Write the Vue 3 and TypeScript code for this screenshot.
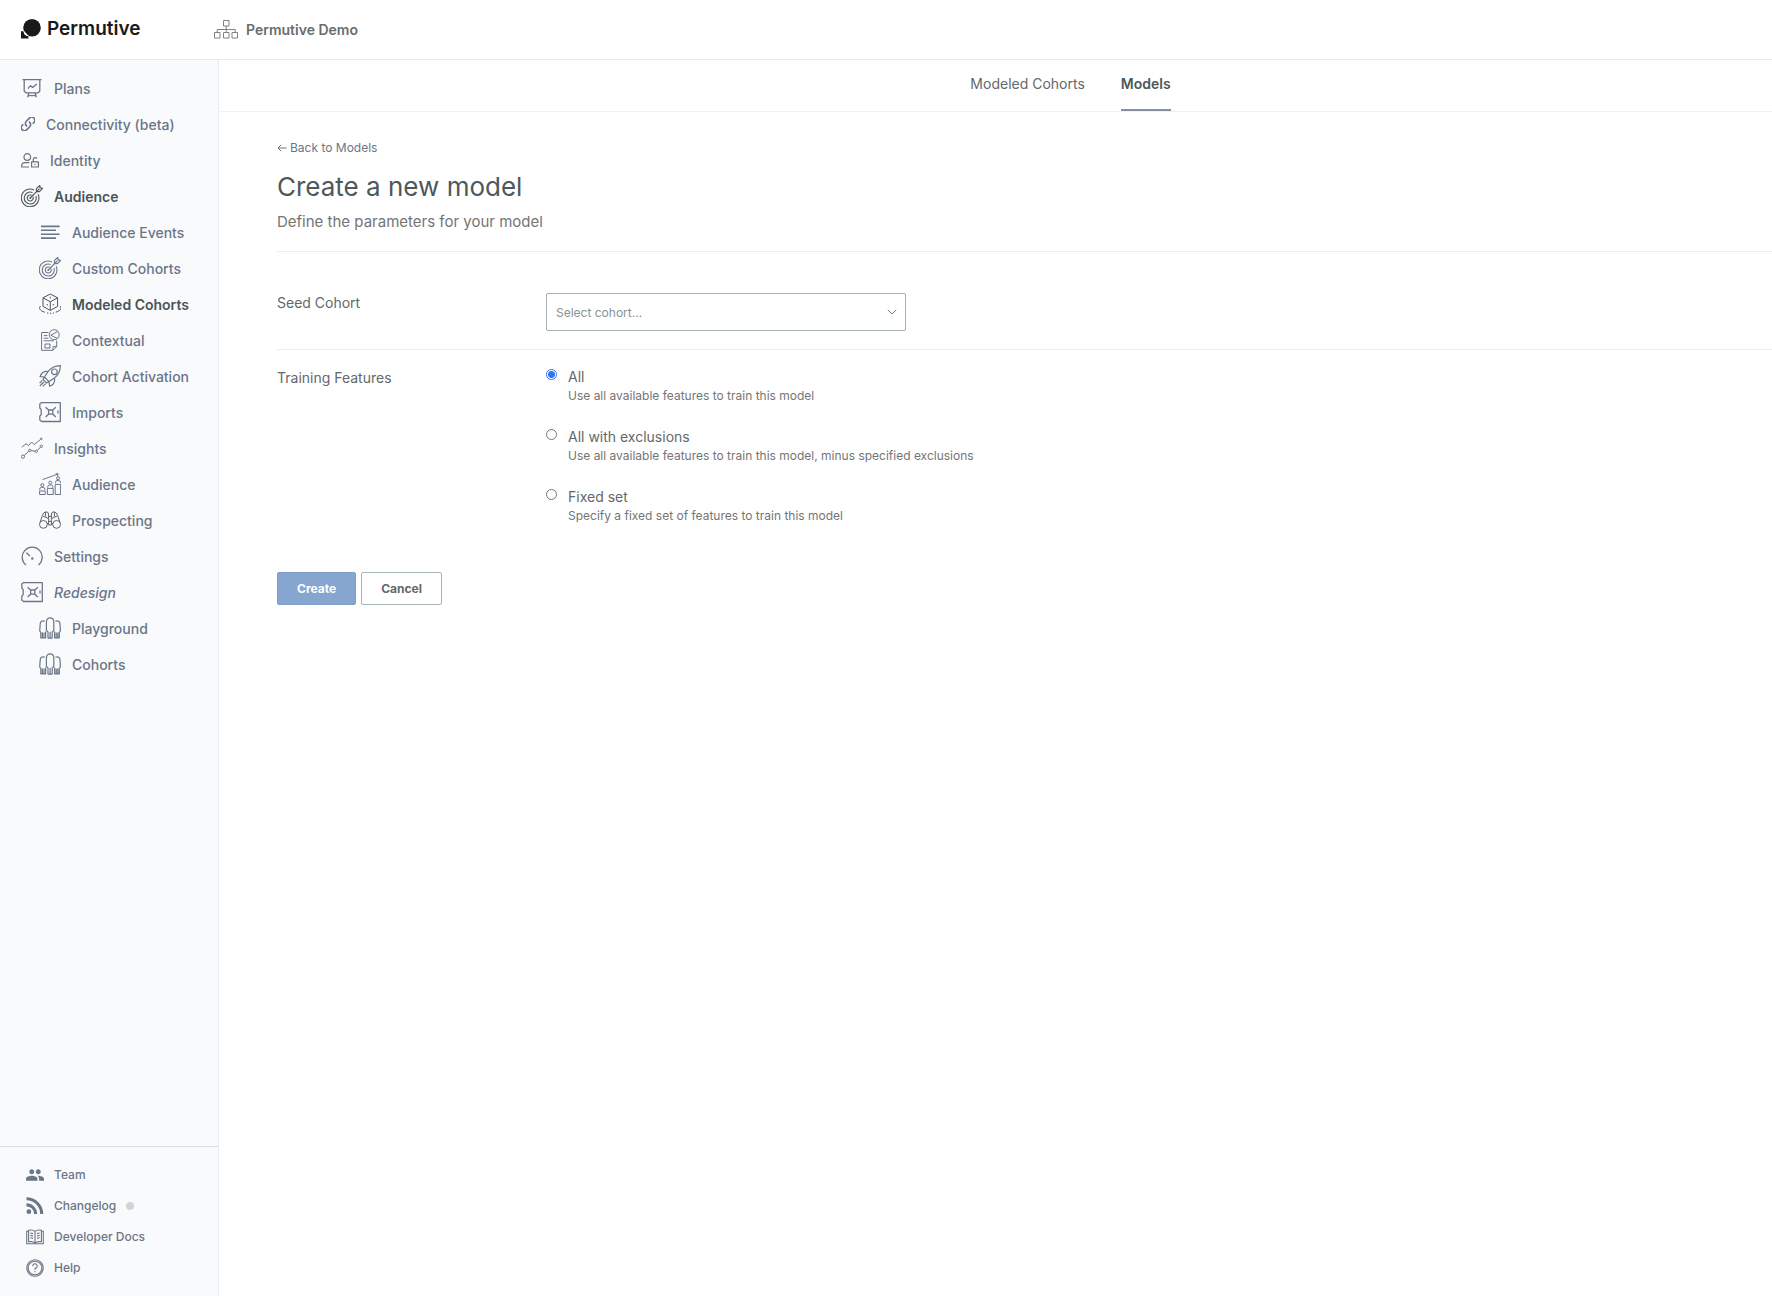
<script setup lang="ts">
import { ref } from 'vue'

interface Icon {
  box: string
  w: number
  h: number
  line?: string
  fill?: string
  weight?: number
  tone?: string
}

interface NavItem {
  label: string
  icon: string
  sub?: boolean
  active?: boolean
  italic?: boolean
  badge?: boolean
}

/** Path data for a full circle. */
const ring = (x: number, y: number, r: number): string =>
  `M${x - r} ${y}a${r} ${r} 0 1 0 ${r * 2} 0a${r} ${r} 0 1 0 ${-r * 2} 0`

/** Path data for one figure with a head and an open body. */
const bust = (x: number, y: number): string =>
  ring(x, y, 1.5) + `M${x - 2.6} ${y + 5.2}V${y + 4.2}Q${x - 2.6} ${y + 2.6} ${x - 1} ${y + 2.4}H${x + 1}Q${x + 2.6} ${y + 2.6} ${x + 2.6} ${y + 4.2}V${y + 5.2}`

const icons: Record<string, Icon> = {
  org: {
    box: '0 0 24 19', w: 24, h: 19,
    line: 'M9.5 .5H15V6H9.5ZM12.2 6V12.5M3.2 12.5V9.5H21.2V12.5M.5 12.5H6V18H.5ZM9.5 12.5H15V18H9.5ZM18 12.5H23.5V18H18Z',
    tone: '#7d8283',
  },
  plans: {
    box: '0 0 22 22', w: 22, h: 22, weight: 1.3,
    line: 'M1.5 2.7H20.5M3.2 2.7V14L5 15.8H17L18.8 14V2.7M6.8 11.6L9.6 8.8L11.6 10.4L15.8 7M8 16L6.5 20.3M14 16L15.5 20.3M7 18.6H15',
  },
  link: {
    box: '2 2 20 20', w: 14, h: 14, weight: 2.3,
    line: 'M13.19 8.69a4.5 4.5 0 0 1 1.24 7.24l-4.5 4.5a4.5 4.5 0 0 1-6.36-6.36l1.76-1.76m13.35-.62 1.76-1.76a4.5 4.5 0 0 0-6.37-6.36l-4.5 4.5a4.5 4.5 0 0 0 1.25 7.24',
  },
  identity: {
    box: '0 0 18 15', w: 18, h: 15, weight: 1.2, tone: '#6b6f75',
    line: ring(6.3, 4, 3.3) + 'M8.2 14H.7V12.6A3 3 0 0 1 3.7 9.6H8.4M10.6 8.9H17.4V14H10.6ZM12.3 8.9V6.3A1.9 1.9 0 0 1 15.9 5.6M14 11V12',
  },
  target: {
    box: '0 0 22 22', w: 22, h: 22, weight: 1.1,
    line: 'M13 5A8.8 8.8 0 1 0 17.1 9.2M11.6 7.5A6 6 0 1 0 14.9 11M10.6 10.3A3 3 0 1 0 12 11.8M9.3 13L18.5 3.6M15.4 6.6V3.6L18.8 .5L19.2 2.9L21.6 3.3L18.4 6.6Z' + ring(9.3, 13, 0.5),
  },
  lines: {
    box: '0 0 22 22', w: 22, h: 22, weight: 1.6,
    line: 'M2 5.4H20.6M2 9.3H17M2 13.2H20.6M2 17.1H17',
  },
  cube: {
    box: '0 0 22 22', w: 22, h: 22,
    line: 'M11.3 1L18.6 4.8V13.4L11.3 17.4L4 13.4V4.8ZM4 4.8L11.3 8.8L18.6 4.8M11.3 8.8V17.4M11.3 3.8V5.4M8 11L8.6 12.4M14.6 11L14 12.4M1.6 13C-.6 15 .8 17.8 5.8 19.2M21 13C23.2 15 21.6 17.8 16.8 19.2M8 20H9.4M11 20.3H12.4M14 20H15',
  },
  contextual: {
    box: '0 0 22 22', w: 22, h: 22,
    line: 'M9.4 3.5H2.6V21.3H14L17.7 17.6V11.5M17.7 17.6H14V21.3M4.8 6.6H8.4M4.8 9.2H9.4M4.8 11.8H14.8M6 15H11V19H6Z' + ring(15.2, 5.7, 5) + 'M18.8 2.4L11.8 6.2L18.2 9.4',
  },
  rocket: {
    box: '0 0 22 22', w: 22, h: 22, weight: 1.2,
    line: 'M21.4 .6C15.6 .8 11.8 2.6 9 6.6L5.4 12L10 16.6L15.4 13C19.4 10.2 21.2 6.4 21.4 .6ZM9 6.6C5 5.8 2.6 7.6 1 11.6L5.4 12M15.4 13C16.2 17 14.6 19.8 10.6 21.2L10 16.6M5.4 12L4 14.4L7.6 18L10 16.6M3.4 15.4L.6 18.2M4.8 17L.8 21M6.6 18.6L3.8 21.4' + ring(15.4, 6.8, 2.8),
  },
  ticket: {
    box: '0 0 22 22', w: 22, h: 22, weight: 1.3,
    line: 'M21.3 1.6H2.6L.8 3V7L2.2 8.6V13.6L.8 15.2V19L2.6 20.5H21.3ZM6.6 6.2L9.8 9.2M16.8 6.2L13.6 9.2M6.6 16L9.8 13M16.8 16L13.6 13M9.6 9H13.8V13.2H9.6ZM19 9.6V12.6',
  },
  insights: {
    box: '0 0 22 22', w: 22, h: 22,
    line: 'M.7 10.2L5 6.8L7.6 8.6L10.6 5L13.2 7.6L19.6 2.4M3.2 18.4L7.8 14.2M10 13.6L14 14.2M16.4 13.4L19.4 10.2' + ring(2, 19.6, 1.6) + ring(8.8, 13.4, 1.2) + ring(15.3, 14.3, 1.2) + ring(20.3, 9.3, 1.2) + ring(20.3, 1.8, 0.8),
  },
  growth: {
    box: '0 0 22 22', w: 22, h: 22,
    line: bust(3.3, 12) + bust(11.3, 9.6) + bust(19, 5.2) + 'M.6 18H6.2V21.5H.6ZM8.4 15.4H14.2V21.5H8.4ZM16.2 11.4H21.6V21.5H16.2ZM3.6 6.6L19 1M16.6 .6L19.2 .9L18.2 3',
  },
  binoculars: {
    box: '0 0 22 22', w: 22, h: 22, tone: '#5f6468',
    line: ring(4.4, 15.4, 3.9) + ring(17.6, 15.4, 3.9) + 'M1 13.4L3.4 6.4Q4 3.4 7 2.8Q9.6 3 9.6 5V16M21 13.4L18.6 6.4Q18 3.4 15 2.8Q12.4 3 12.4 5V16M9.6 7.4H12.4M9.6 12.4H12.4M8.2 14L9.6 16H12.4L13.8 14M4 7L9 9.4M18 7L13 9.4M6.6 3V7.6M15.4 3V7.6',
  },
  gauge: {
    box: '0 0 22 22', w: 22, h: 22, weight: 1.3,
    line: 'M5 20A10 10 0 1 1 17.4 20M5.4 7.6L8.8 11' + ring(11.3, 13.4, 0.6),
  },
  people: {
    box: '0 0 22 22', w: 22, h: 22, weight: 1.2,
    line: 'M9 21.4V15L7.4 13.4V5C7.4 2.4 9 .8 11.1 .8S14.8 2.4 14.8 5V13.4L13.2 15V21.4M9 21.2H13.2M11.1 15V21M5.8 4.2C3.2 3 1.2 4.6 1.2 7L.7 14L1.8 15.4V20.8H6.6V14.6M16.4 4.2C19 3 21 4.6 21 7L21.4 14L20.3 15.4V20.8H15.6V14.6M3.4 15.4V20.6M5 15.4V20.6M17.2 15.4V20.6M18.8 15.4V20.6',
  },
  team: {
    box: '1 1 22 22', w: 18, h: 18,
    fill: 'M16 11c1.66 0 2.99-1.34 2.99-3S17.66 5 16 5s-3 1.34-3 3 1.34 3 3 3zm-8 0c1.66 0 2.99-1.34 2.99-3S9.66 5 8 5 5 6.34 5 8s1.34 3 3 3zm0 2c-2.33 0-7 1.17-7 3.5V19h14v-2.5C15 14.17 10.33 13 8 13zm8 0c-.29 0-.62.02-.97.05 1.16.84 1.97 1.97 1.97 3.45V19h6v-2.5c0-2.33-4.67-3.5-7-3.5z',
  },
  feed: {
    box: '4 4.2 15.8 15.8', w: 18, h: 17,
    fill: 'M6.18 15.64a2.18 2.18 0 1 1 0 4.36 2.18 2.18 0 0 1 0-4.36M4 4.44A15.56 15.56 0 0 1 19.56 20h-2.83A12.73 12.73 0 0 0 4 7.27zm0 5.66a9.9 9.9 0 0 1 9.9 9.9h-2.83A7.07 7.07 0 0 0 4 12.93z',
  },
  book: {
    box: '0 0 18 16', w: 18, h: 16, weight: 1.1,
    line: 'M9 2.4C7.6 1 5 .8 2.6 1.2V12.8C5 12.4 7.6 12.6 9 14C10.4 12.6 13 12.4 15.4 12.8V1.2C13 .8 10.4 1 9 2.4V14M2.6 2.2H.7V14.8H17.3V2.2H15.4M4.4 4L7 4.6M4.4 6.4L7 7M4.4 8.8L7 9.4M13.6 4L11 4.6M13.6 6.4L11 7M13.6 8.8L11 9.4',
  },
  help: {
    box: '0 0 18 18', w: 18, h: 18, weight: 1.1,
    line: ring(9, 9, 8.2) + ring(9, 9, 6.8) + 'M6.8 7.2A2.2 2.2 0 1 1 9 9.2V10.8M9 12V13.2',
  },
}

const mainNav: NavItem[] = [
  { label: 'Plans', icon: 'plans' },
  { label: 'Connectivity (beta)', icon: 'link' },
  { label: 'Identity', icon: 'identity' },
  { label: 'Audience', icon: 'target', active: true },
  { label: 'Audience Events', icon: 'lines', sub: true },
  { label: 'Custom Cohorts', icon: 'target', sub: true },
  { label: 'Modeled Cohorts', icon: 'cube', sub: true, active: true },
  { label: 'Contextual', icon: 'contextual', sub: true },
  { label: 'Cohort Activation', icon: 'rocket', sub: true },
  { label: 'Imports', icon: 'ticket', sub: true },
  { label: 'Insights', icon: 'insights' },
  { label: 'Audience', icon: 'growth', sub: true },
  { label: 'Prospecting', icon: 'binoculars', sub: true },
  { label: 'Settings', icon: 'gauge' },
  { label: 'Redesign', icon: 'ticket', italic: true },
  { label: 'Playground', icon: 'people', sub: true },
  { label: 'Cohorts', icon: 'people', sub: true },
]

const footNav: NavItem[] = [
  { label: 'Team', icon: 'team' },
  { label: 'Changelog', icon: 'feed', badge: true },
  { label: 'Developer Docs', icon: 'book' },
  { label: 'Help', icon: 'help' },
]

const features = [
  { value: 'all', label: 'All', hint: 'Use all available features to train this model' },
  { value: 'exclusions', label: 'All with exclusions', hint: 'Use all available features to train this model, minus specified exclusions' },
  { value: 'fixed', label: 'Fixed set', hint: 'Specify a fixed set of features to train this model' },
]

const training = ref('all')
const cohort = ref('')
</script>

<template>
  <div class="app">
    <header class="topbar">
      <a class="brand" href="#">
        <svg width="20" height="20" viewBox="0 0 20 20" fill="currentColor" aria-hidden="true">
          <circle cx="11" cy="8.8" r="8.8" />
          <path d="M0 12.3H2.6C2.8 15.4 4.4 17 7.4 17.2V19.4H0Z" />
          <path d="M2.6 11.6C2.6 15.2 4.6 17.2 8 17.2Z" fill="#fff" />
        </svg>
        <span>Permutive</span>
      </a>
      <a class="tenant" href="#">
        <svg :width="icons.org.w" :height="icons.org.h" :viewBox="icons.org.box" fill="none" :stroke="icons.org.tone" aria-hidden="true">
          <path :d="icons.org.line" />
        </svg>
        <span>Permutive Demo</span>
      </a>
    </header>

    <div class="body">
      <aside class="sidebar">
        <nav class="nav" aria-label="Main">
          <a
            v-for="(item, i) in mainNav"
            :key="i"
            href="#"
            class="nav-item"
            :class="{ sub: item.sub, active: item.active, italic: item.italic }"
          >
            <svg
              :width="icons[item.icon].w"
              :height="icons[item.icon].h"
              :viewBox="icons[item.icon].box"
              fill="none"
              :stroke="icons[item.icon].tone ?? 'currentColor'"
              :stroke-width="icons[item.icon].weight ?? 1"
              stroke-linejoin="round"
              aria-hidden="true"
            >
              <path :d="icons[item.icon].line" />
            </svg>
            <span>{{ item.label }}</span>
          </a>
        </nav>
        <nav class="foot" aria-label="Resources">
          <a v-for="item in footNav" :key="item.label" href="#" class="foot-item">
            <svg
              :width="icons[item.icon].w"
              :height="icons[item.icon].h"
              :viewBox="icons[item.icon].box"
              fill="none"
              :stroke-width="icons[item.icon].weight ?? 1"
              aria-hidden="true"
            >
              <path v-if="icons[item.icon].line" :d="icons[item.icon].line" stroke="currentColor" />
              <path v-if="icons[item.icon].fill" :d="icons[item.icon].fill" fill="currentColor" />
            </svg>
            <span>{{ item.label }}</span>
            <i v-if="item.badge" class="dot"></i>
          </a>
        </nav>
      </aside>

      <main class="main">
        <nav class="tabs" aria-label="Cohort sections">
          <a href="#" class="tab">Modeled Cohorts</a>
          <a href="#" class="tab current">Models</a>
        </nav>

        <form class="content" @submit.prevent>
          <div class="intro">
            <a class="back" href="#">
              <svg width="10" height="8" viewBox="0 0 10 8" fill="none" stroke="currentColor" aria-hidden="true">
                <path d="M9.6 4H1M4.2 .8L1 4L4.2 7.2" />
              </svg>
              <span>Back to Models</span>
            </a>
            <h1>Create a new model</h1>
            <p>Define the parameters for your model</p>
          </div>

          <div class="row seed">
            <label class="row-label" for="cohort">Seed Cohort</label>
            <div class="picker">
              <select id="cohort" v-model="cohort">
                <option value="">Select cohort...</option>
              </select>
              <svg width="10" height="6" viewBox="0 0 10 6" fill="none" stroke="currentColor" aria-hidden="true">
                <path d="M.8 .8L5 5L9.2 .8" />
              </svg>
            </div>
          </div>

          <div class="row training" role="radiogroup" aria-labelledby="training">
            <span id="training" class="row-label">Training Features</span>
            <div class="options">
              <label v-for="f in features" :key="f.value" class="option">
                <input v-model="training" type="radio" name="training" :value="f.value" />
                <span class="option-text">
                  <span class="option-label">{{ f.label }}</span>
                  <span class="option-hint">{{ f.hint }}</span>
                </span>
              </label>
            </div>
          </div>

          <div class="actions">
            <button type="submit" class="btn primary">Create</button>
            <button type="button" class="btn">Cancel</button>
          </div>
        </form>
      </main>
    </div>
  </div>
</template>

<style>
body {
  margin: 0;
  background: #fff;
}
</style>

<style scoped>
.app {
  display: flex;
  flex-direction: column;
  min-height: 100vh;
  font-family: Inter, "Liberation Sans", sans-serif;
  font-size: 14px;
  color: #63686a;
}

a {
  color: inherit;
  text-decoration: none;
}

svg {
  flex: none;
}

.topbar {
  display: flex;
  align-items: center;
  box-sizing: border-box;
  height: 60px;
  padding-left: 21px;
  border-bottom: 1px solid #e9eaeb;
}

.brand {
  display: flex;
  align-items: center;
  gap: 6px;
  width: 193px;
  padding-bottom: 2px;
  font-size: 19px;
  line-height: 24px;
  font-weight: 600;
  color: #1a1a1a;
}

.tenant {
  display: flex;
  align-items: center;
  gap: 8px;
  font-weight: 600;
  color: #686d6e;
}

.body {
  display: flex;
  flex: 1;
}

.sidebar {
  display: flex;
  flex: none;
  flex-direction: column;
  justify-content: space-between;
  width: 218px;
  background: #f9fafc;
  border-right: 1px solid #e9ebee;
  color: #6b7588;
}

.nav {
  padding-top: 10px;
}

.nav-item {
  display: flex;
  align-items: center;
  gap: 11px;
  height: 36px;
  padding-left: 21px;
  font-weight: 500;
  white-space: nowrap;
}

.nav-item.sub {
  padding-left: 39px;
}

.nav-item.active {
  font-weight: 600;
  color: #4a5557;
}

.nav-item.italic {
  font-style: italic;
}

.foot {
  padding: 12px 0 13px 26px;
  border-top: 1px solid #d6dae4;
}

.foot-item {
  display: flex;
  align-items: center;
  gap: 10px;
  height: 31px;
  font-size: 12px;
  font-weight: 500;
}

.dot {
  width: 8px;
  height: 8px;
  border-radius: 50%;
  background: #d3d3d3;
}

.main {
  flex: 1;
  min-width: 0;
}

.tabs {
  display: flex;
  justify-content: center;
  gap: 36px;
  box-sizing: border-box;
  height: 52px;
  padding-left: 150px;
  border-bottom: 1px solid #f1f2f2;
}

.tab {
  box-sizing: border-box;
  height: 51px;
  padding-top: 14px;
  line-height: 20px;
}

.tab.current {
  font-weight: 600;
  color: #4c585b;
  border-bottom: 2px solid #868fa3;
}

.content {
  padding-left: 58px;
}

.intro {
  padding: 28px 0 17px;
  border-bottom: 1px solid #ebecec;
}

.back {
  display: flex;
  align-items: center;
  gap: 3px;
  font-size: 12px;
  line-height: 16px;
  color: #6b7588;
}

h1 {
  margin: 15px 0 7px;
  font-size: 26px;
  line-height: 32px;
  font-weight: 400;
  color: #4c585b;
}

p {
  margin: 0;
  font-size: 15px;
  line-height: 24px;
  color: #757575;
}

.row {
  display: flex;
}

.row-label {
  width: 269px;
  line-height: 20px;
}

.seed {
  padding: 41px 0 18px;
  border-bottom: 1px solid #ebecec;
}

.picker {
  position: relative;
  width: 360px;
}

.picker select {
  display: block;
  box-sizing: border-box;
  width: 100%;
  height: 38px;
  padding: 0 32px 0 9px;
  appearance: none;
  background: #fff;
  border: 1px solid #a3b1b1;
  border-radius: 2px;
  font-family: inherit;
  font-size: 12px;
  color: #869494;
}

.picker svg {
  position: absolute;
  right: 9px;
  top: 16px;
  color: #757b7c;
  pointer-events: none;
}

.training {
  padding-top: 18px;
}

.options {
  display: flex;
  flex-direction: column;
  gap: 22px;
}

.option {
  display: flex;
  gap: 11px;
}

.option input {
  flex: none;
  box-sizing: border-box;
  width: 11px;
  height: 11px;
  margin: 1px 0 0;
  appearance: none;
  border: 1px solid #767676;
  border-radius: 50%;
  background: #fff;
}

.option input:checked {
  border-color: #2f74f5;
  background: radial-gradient(circle, #2f74f5 3px, #fff 4px);
}

.option-text {
  display: flex;
  flex-direction: column;
}

.option-label {
  line-height: 18px;
}

.option-hint {
  font-size: 12px;
  line-height: 20px;
  color: #757575;
}

.actions {
  display: flex;
  gap: 5px;
  padding-top: 46px;
}

.btn {
  box-sizing: border-box;
  height: 33px;
  padding: 0 19px;
  background: #fff;
  border: 1px solid #a9b4b4;
  border-radius: 2px;
  font-family: inherit;
  font-size: 12px;
  font-weight: 700;
  color: #63686a;
}

.btn.primary {
  background: #86a6cf;
  border-color: #7d9ec9;
  color: #fff;
}
</style>
